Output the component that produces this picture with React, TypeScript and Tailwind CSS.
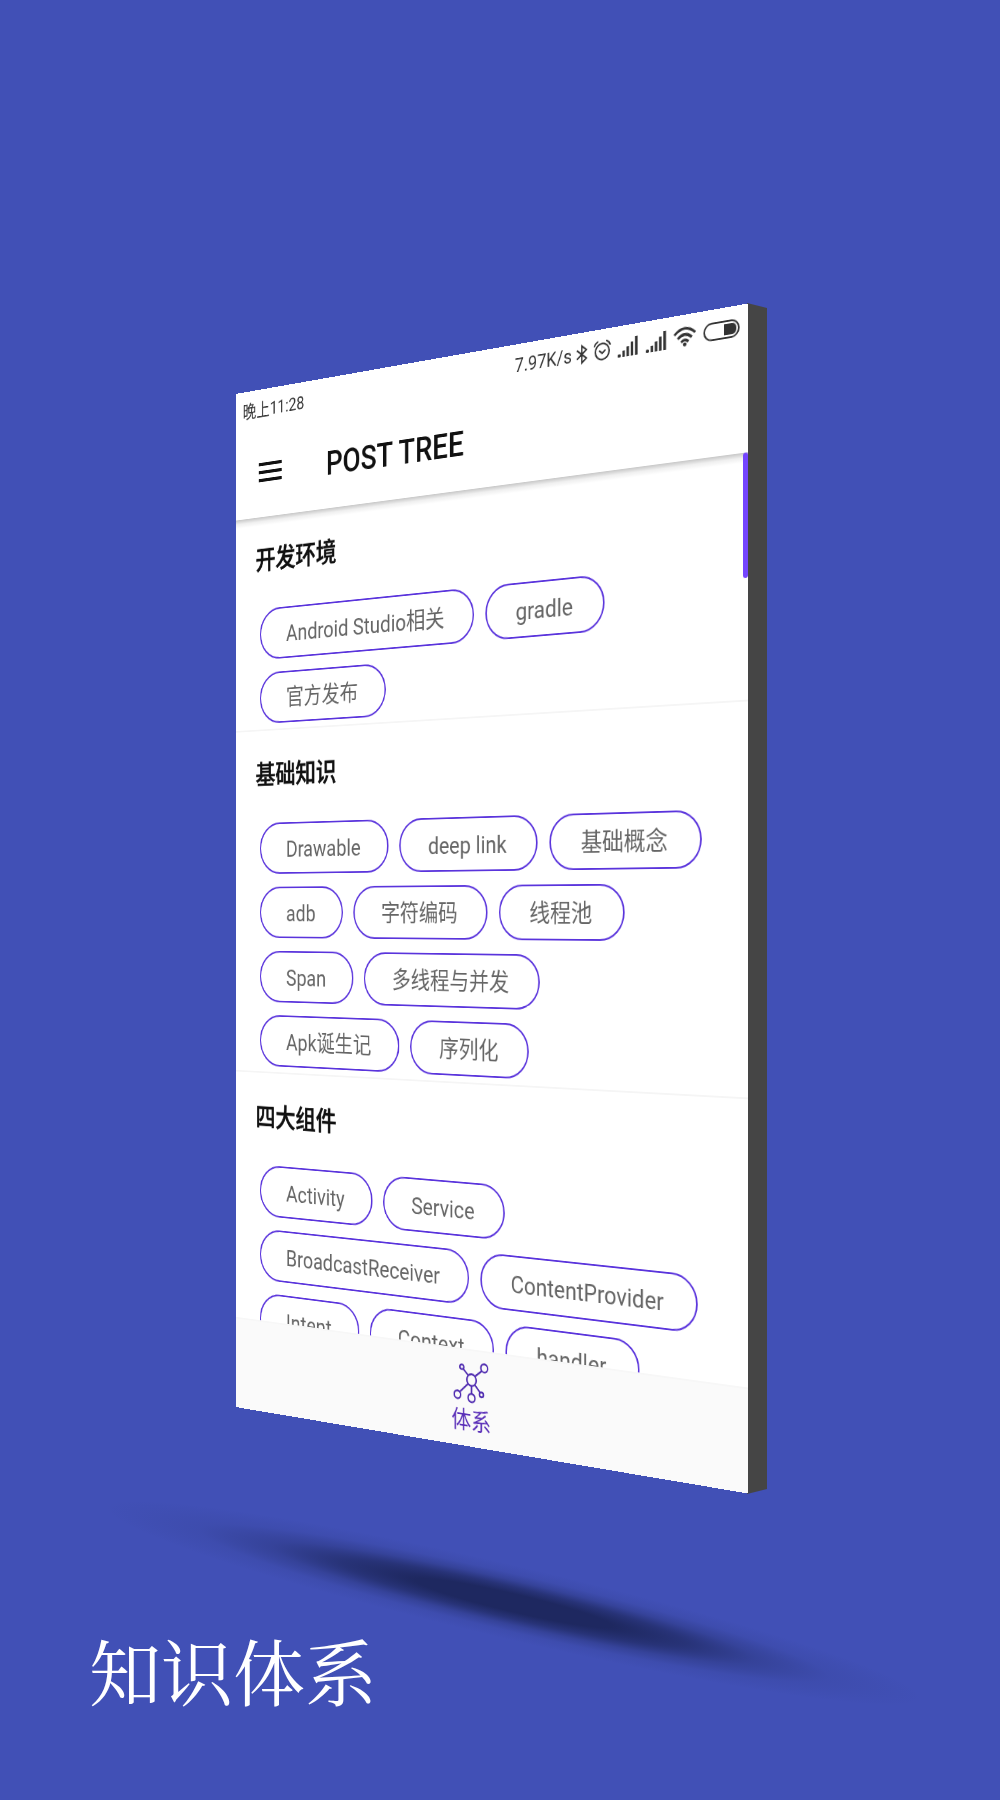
const sections = [
  {
    title: '开发环境',
    chips: ['Android Studio相关', 'gradle', '官方发布'],
  },
  {
    title: '基础知识',
    chips: ['Drawable', 'deep link', '基础概念', 'adb', '字符编码', '线程池', 'Span', '多线程与并发', 'Apk诞生记', '序列化'],
  },
  {
    title: '四大组件',
    chips: ['Activity', 'Service', 'BroadcastReceiver', 'ContentProvider', 'Intent', 'Context', 'handler'],
  },
];

function Signal() {
  return (
    <svg width="26" height="21" viewBox="0 0 26 21" fill="#333">
      <rect x="0" y="17.5" width="4" height="3.5" rx="1.2" />
      <rect x="6.2" y="14" width="3" height="7" />
      <rect x="11.4" y="10" width="3.2" height="11" />
      <rect x="16.8" y="5.5" width="3.2" height="15.5" />
      <rect x="22.2" y="0" width="3.4" height="21" />
    </svg>
  );
}

function StatusBar() {
  return (
    <div className="flex h-12 items-center justify-between pl-3 pr-[10px] text-[22px] leading-none text-[#333]">
      <span className="pt-[3px]">晚上11:28</span>
      <div className="flex items-center">
        <span className="pt-[2px]">7.97K/s</span>
        <svg className="ml-[5px]" width="17" height="23" viewBox="0 0 15 20" fill="none" stroke="#333" strokeWidth="1.7">
          <path d="M1.5 5.5 L12.5 14.2 L7.2 18.4 V1.6 L12.5 5.8 L1.5 14.5" />
        </svg>
        <svg className="ml-[6px]" width="24" height="24" viewBox="0 0 24 24" fill="none" stroke="#333" strokeWidth="2" strokeLinecap="round">
          <circle cx="12" cy="13" r="9" />
          <path d="M1.8 6 Q3 3 6 1.6 M22.2 6 Q21 3 18 1.6 M8.6 12.2 L12 15 L15.6 12" />
        </svg>
        <div className="ml-2 flex">
          <Signal />
        </div>
        <div className="ml-[10px] flex">
          <Signal />
        </div>
        <svg className="ml-[9px]" width="28" height="22" viewBox="0 0 28 22" fill="none" stroke="#333" strokeWidth="3">
          <path d="M1 8 Q14 -4 27 8" />
          <path d="M5.2 12.6 Q14 4.6 22.8 12.6" />
          <path d="M9.4 16.8 Q14 12.8 18.6 16.8" />
          <circle cx="14" cy="19.6" r="2.2" fill="#333" stroke="none" />
        </svg>
        <div className="ml-[9px] flex h-[20px] w-[44px] items-center justify-end rounded-full border-2 border-[#333] pr-[2px]">
          <div className="h-[12px] w-[15px] rounded-r-[5px] bg-[#333]" />
        </div>
      </div>
    </div>
  );
}

function AppBar() {
  return (
    <div className="flex h-28 items-center pl-[38px] text-[#111]">
      <svg width="37" height="24" viewBox="0 0 37 24" fill="currentColor">
        <rect y="0" width="37" height="4" />
        <rect y="10" width="37" height="4" />
        <rect y="20" width="37" height="4" />
      </svg>
      <h1 className="ml-[70px] pt-1 text-[40px] leading-none font-medium whitespace-nowrap">POST TREE</h1>
    </div>
  );
}

function Section({ title, chips }: { title: string; chips: string[] }) {
  return (
    <section className="group border-b-2 border-[#f5f5f5] pt-[39px] pb-[7px] first:pt-[38px]">
      <h2 className="mb-11 pl-[33px] text-[32px] leading-8 font-medium text-[#111] [-webkit-text-stroke:0.6px_#111] group-first:mb-[45px]">
        {title}
      </h2>
      <div className="flex flex-wrap gap-x-4 gap-y-4 pr-10 pl-10">
        {chips.map((chip) => (
          <span
            key={chip}
            className="flex h-16 items-center rounded-full border-2 border-[#5a34dc] px-10 pt-[3px] text-[28px] leading-none whitespace-nowrap text-[#666]"
          >
            {chip}
          </span>
        ))}
      </div>
    </section>
  );
}

function BottomBar() {
  return (
    <div className="flex h-[114px] shrink-0 flex-col items-center border-t-2 border-[#f7f7f7] bg-[#fafafa] pt-[11px]">
      <svg width="50" height="52" viewBox="-25.5 -23 50 52" fill="none" stroke="#4f2bb0" strokeWidth="2.1">
        <ellipse rx="6.6" ry="6.9" />
        <circle cx="-13.7" cy="-14" r="2.8" />
        <circle cx="17.9" cy="-15.8" r="4.8" />
        <circle cx="-20" cy="19" r="4.6" />
        <circle cx="0" cy="21" r="4.9" />
        <circle cx="14" cy="15.4" r="2.8" />
        <path d="M-11.6 -11.8 L-4.6 -5 M14.2 -12.2 L4.8 -4.8 M-16.6 15.6 L-4.8 4.8 M0 16 V6.8 M12 13 L4.6 5" />
      </svg>
      <span className="mt-[4px] text-[28px] leading-8 text-[#5a2fb8]">体系</span>
    </div>
  );
}

function Phone() {
  return (
    <div className="absolute top-0 left-0 flex h-[1280px] w-[720px] origin-top-left flex-col overflow-hidden bg-white [transform:matrix3d(0.557284,-0.18839,0,-0.000206583,0,0.791406,0,0,0,0,1,0,235.5,394,0,1)]">
      <header className="shrink-0">
        <StatusBar />
        <AppBar />
      </header>
      <main className="relative min-h-0 flex-1 overflow-hidden">
        <div>
          {sections.map((section) => (
            <Section key={section.title} title={section.title} chips={section.chips} />
          ))}
        </div>
        <div className="absolute inset-x-0 top-0 h-[11px] bg-linear-to-b from-black/22 via-black/6 to-transparent" />
        <div className="absolute top-0 right-0 h-[135px] w-[6px] rounded-full bg-[#7445ff]" />
      </main>
      <BottomBar />
    </div>
  );
}

export default function App() {
  return (
    <div className="relative h-[1800px] w-[1000px] overflow-hidden bg-[#4150b6] font-[Roboto,'Noto_Sans_CJK_SC',sans-serif]">
      <div className="absolute top-[1566px] left-[94px] h-[74px] w-[840px] rotate-[13.2deg] bg-[radial-gradient(closest-side,#1e2860_0%,#1e2860_24%,#1e2860b8_42%,#1e286055_59%,#1e286018_77%,#1e286000_100%)]" />
      <div className="absolute top-[303px] left-[747px] h-[1191px] w-[20px] bg-[#454545] [clip-path:polygon(0_0,100%_5px,100%_calc(100%_-_5px),0_100%)]" />
      <Phone />
      <h3 className="absolute top-[1631px] left-[89px] text-[72px] leading-[76px] font-normal whitespace-nowrap text-white [font-family:'Noto_Serif_CJK_SC','Noto_Sans_CJK_SC',serif]">
        知识体系
      </h3>
    </div>
  );
}
